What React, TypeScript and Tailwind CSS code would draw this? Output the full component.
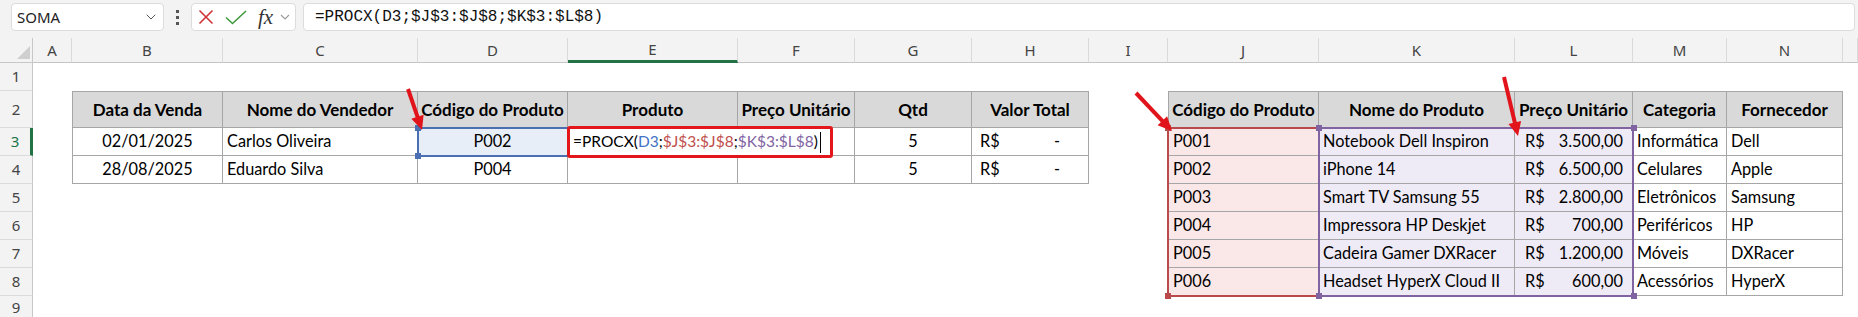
import React from 'react';
import { ChevronDown } from 'lucide-react';

type Align = 'l' | 'c';
type Cell = { t?: string; a?: Align; b?: boolean; bg?: string; acct?: [string, string]; pad?: string };

const HEAD = 'bg-[#d9d9d9]';
const PINK = 'bg-[#fae7e7]';
const LAV = 'bg-[#efebf6]';
const SEL = 'bg-[#e8eef8]';

const letters = ['A', 'B', 'C', 'D', 'E', 'F', 'G', 'H', 'I', 'J', 'K', 'L', 'M', 'N', ''];

const head = (t: string): Cell => ({ t, a: 'c', b: true, bg: HEAD });

const vendas: Cell[][] = [
  ['Data da Venda', 'Nome do Vendedor', 'Código do Produto', 'Produto', 'Preço Unitário', 'Qtd', 'Valor Total'].map(head),
  [
    { t: '02/01/2025', a: 'c' },
    { t: 'Carlos Oliveira', a: 'l' },
    { t: 'P002', a: 'c', bg: SEL },
    {},
    {},
    { t: '5', a: 'c' },
    { acct: ['R$', '-'], pad: 'pl-[8px] pr-[28px]' },
  ],
  [
    { t: '28/08/2025', a: 'c' },
    { t: 'Eduardo Silva', a: 'l' },
    { t: 'P004', a: 'c' },
    {},
    {},
    { t: '5', a: 'c' },
    { acct: ['R$', '-'], pad: 'pl-[8px] pr-[28px]' },
  ],
];

const produtos = [
  ['P001', 'Notebook Dell Inspiron', '3.500,00', 'Informática', 'Dell'],
  ['P002', 'iPhone 14', '6.500,00', 'Celulares', 'Apple'],
  ['P003', 'Smart TV Samsung 55', '2.800,00', 'Eletrônicos', 'Samsung'],
  ['P004', 'Impressora HP Deskjet', '700,00', 'Periféricos', 'HP'],
  ['P005', 'Cadeira Gamer DXRacer', '1.200,00', 'Móveis', 'DXRacer'],
  ['P006', 'Headset HyperX Cloud II', '600,00', 'Acessórios', 'HyperX'],
];

const catalogo: Cell[][] = [
  ['Código do Produto', 'Nome do Produto', 'Preço Unitário', 'Categoria', 'Fornecedor'].map(head),
  ...produtos.map((p): Cell[] => [
    { t: p[0], a: 'l', bg: PINK },
    { t: p[1], a: 'l', bg: LAV },
    { acct: ['R$', p[2]], bg: LAV, pad: 'pl-[10px] pr-[9px]' },
    { t: p[3], a: 'l' },
    { t: p[4], a: 'l' },
  ]),
];

function tableCell(r: number, c: number) {
  if (r >= 2 && r <= 4 && c >= 2 && c <= 8) return { cell: vendas[r - 2][c - 2], top: r === 2, left: c === 2 };
  if (r >= 2 && r <= 8 && c >= 10 && c <= 14) return { cell: catalogo[r - 2][c - 10], top: r === 2, left: c === 10 };
  return null;
}

function CellView({ cell, top, left }: { cell: Cell; top: boolean; left: boolean }) {
  const cls = [
    'h-full flex items-center whitespace-nowrap overflow-hidden border-[#a6a6a6] border-r border-b',
    top ? 'border-t' : '',
    left ? 'border-l' : '',
    cell.bg ?? '',
    cell.b ? 'font-bold text-[17px]' : '',
  ].join(' ');
  if (cell.acct) {
    return (
      <div className={`${cls} justify-between ${cell.pad}`}>
        <span>{cell.acct[0]}</span>
        <span>{cell.acct[1]}</span>
      </div>
    );
  }
  return <div className={`${cls} ${cell.a === 'l' ? 'justify-start pl-[4px]' : 'justify-center'}`}>{cell.t}</div>;
}

function Arrow({ x1, y1, x2, y2 }: { x1: number; y1: number; x2: number; y2: number }) {
  const dx = x2 - x1;
  const dy = y2 - y1;
  const len = Math.hypot(dx, dy);
  const ux = dx / len;
  const uy = dy / len;
  const bx = x2 - ux * 14;
  const by = y2 - uy * 14;
  const nx = -uy * 6.5;
  const ny = ux * 6.5;
  return (
    <g>
      <line x1={x1} y1={y1} x2={bx + ux * 2} y2={by + uy * 2} stroke="#e2141b" strokeWidth={4} />
      <polygon points={`${x2},${y2} ${bx + nx},${by + ny} ${bx - nx},${by - ny}`} fill="#e2141b" />
    </g>
  );
}

function Toolbar() {
  return (
    <div className="h-[38px] bg-[#f3f3f3] flex items-start pt-[3px] pl-[11px] pr-[3px]">
      <div className="w-[153px] h-[28px] bg-white border border-[#dcdcdc] rounded-[4px] flex items-center justify-between pl-[5px] pr-[4px] font-['Noto_Sans',sans-serif] text-[15px] text-[#222]">
        <span>SOMA</span>
        <ChevronDown size={16} strokeWidth={1.5} color="#555" />
      </div>
      <div className="w-[27px] h-[28px] flex flex-col items-center justify-center gap-[3px]">
        <span className="w-[3px] h-[3px] bg-[#555]" />
        <span className="w-[3px] h-[3px] bg-[#555]" />
        <span className="w-[3px] h-[3px] bg-[#555]" />
      </div>
      <div className="w-[105px] h-[28px] bg-white border border-[#dcdcdc] rounded-[4px] flex items-center pl-[6px]">
        <svg width="16" height="16" viewBox="0 0 16 16">
          <path d="M1.5 1.5L14.5 14.5M14.5 1.5L1.5 14.5" stroke="#d13438" strokeWidth="1.6" fill="none" />
        </svg>
        <svg width="22" height="15" viewBox="0 0 22 15" className="ml-[11px]">
          <path d="M1 7.5L7.5 13.5L21 1" stroke="#3e9a3e" strokeWidth="1.6" fill="none" />
        </svg>
        <span className="ml-[11px] font-['Liberation_Serif',serif] italic text-[21px] leading-none text-[#333]">fx</span>
        <svg width="10" height="6" viewBox="0 0 10 6" className="ml-[7px]">
          <path d="M1 1L5 5L9 1" stroke="#9a9a9a" strokeWidth="1.1" fill="none" />
        </svg>
      </div>
      <div className="ml-[7px] flex-1 h-[28px] bg-white border border-[#dcdcdc] rounded-[4px] flex items-center pl-[11px] font-['Liberation_Mono',monospace] text-[16px] text-[#111]">
        =PROCX(D3;$J$3:$J$8;$K$3:$L$8)
      </div>
    </div>
  );
}

function Sheet() {
  const rows = Array.from({ length: 10 }, (_, r) => r);
  const cols = Array.from({ length: 16 }, (_, c) => c);
  return (
    <div className="relative">
      <div className="grid grid-cols-[33px_39px_151px_195px_150px_170px_117px_117px_117px_79px_151px_196px_118px_94px_116px_1fr] grid-rows-[25px_28px_37px_28px_28px_28px_28px_28px_28px_1fr] h-[279px]">
        {rows.map((r) =>
          cols.map((c) => {
            const key = `${r}-${c}`;
            if (r === 0 && c === 0) {
              return (
                <div key={key} className="bg-[#f3f3f3] border-r border-b border-[#c8c8c8] flex items-end justify-end pr-[2px] pb-[3px]">
                  <svg width="13" height="13" viewBox="0 0 13 13">
                    <polygon points="13,0 13,13 0,13" fill="#cfcfcf" />
                  </svg>
                </div>
              );
            }
            if (r === 0) {
              return (
                <div
                  key={key}
                  className={`bg-[#f3f3f3] border-r border-[#dadada] flex items-center justify-center font-['Noto_Sans',sans-serif] text-[15px] text-[#444] ${
                    c === 5 ? 'border-b-[3px] border-b-[#217346]' : 'border-b border-b-[#c4c4c4]'
                  }`}
                >
                  {letters[c - 1]}
                </div>
              );
            }
            if (c === 0) {
              return (
                <div
                  key={key}
                  className={`bg-[#f3f3f3] border-b border-[#dcdcdc] flex items-center justify-center font-['Noto_Sans',sans-serif] text-[15px] ${
                    r === 3 ? 'border-r-[3px] border-r-[#217346] text-[#217346]' : 'border-r border-r-[#c8c8c8] text-[#444]'
                  }`}
                >
                  {r}
                </div>
              );
            }
            const tc = tableCell(r, c);
            if (tc) return <CellView key={key} cell={tc.cell} top={tc.top} left={tc.left} />;
            return <div key={key} className="bg-white" />;
          })
        )}
      </div>

      {/* D3 reference highlight */}
      <div className="absolute left-[417px] top-[89px] w-[152px] h-[30px] border-2 border-[#4a70b3]" />
      <div className="absolute left-[415px] top-[87px] w-[6px] h-[6px] bg-[#4a70b3]" />
      <div className="absolute left-[415px] top-[115px] w-[6px] h-[6px] bg-[#4a70b3]" />

      {/* ranges J3:J8 and K3:L8 */}
      <div className="absolute left-[1167px] top-[89px] w-[153px] h-[170px] border-2 border-[#b84a4c]" />
      <div className="absolute left-[1318px] top-[89px] w-[316px] h-[170px] border-2 border-[#8064a2]" />
      <div className="absolute left-[1165px] top-[87px] w-[6px] h-[6px] bg-[#b84a4c]" />
      <div className="absolute left-[1165px] top-[255px] w-[6px] h-[6px] bg-[#b84a4c]" />
      <div className="absolute left-[1316px] top-[87px] w-[6px] h-[6px] bg-[#8064a2]" />
      <div className="absolute left-[1631px] top-[87px] w-[6px] h-[6px] bg-[#8064a2]" />
      <div className="absolute left-[1316px] top-[255px] w-[6px] h-[6px] bg-[#8064a2]" />
      <div className="absolute left-[1631px] top-[255px] w-[6px] h-[6px] bg-[#8064a2]" />

      {/* cell being edited, E3 */}
      <div className="absolute left-[567px] top-[88px] w-[266px] h-[32px] border-[3px] border-[#e3161b] rounded-[3px] bg-white flex items-center pl-[3px] whitespace-nowrap text-[15.5px]">
        <span>=PROCX(</span>
        <span className="text-[#4472c4]">D3</span>
        <span>;</span>
        <span className="text-[#c0504d]">$J$3:$J$8</span>
        <span>;</span>
        <span className="text-[#8064a2]">$K$3:$L$8</span>
        <span>)</span>
        <span className="ml-[2px] w-px h-[21px] bg-black" />
      </div>

      <svg className="absolute inset-0 w-full h-full pointer-events-none" width="1858" height="279">
        <Arrow x1={408} y1={51} x2={422} y2={92} />
        <Arrow x1={1136} y1={55} x2={1172} y2={93} />
        <Arrow x1={1504} y1={39} x2={1518} y2={98} />
      </svg>
    </div>
  );
}

export default function App() {
  return (
    <div className="w-[1858px] h-[317px] overflow-hidden bg-white font-['Lato',sans-serif] text-[16.3px] text-black">
      <Toolbar />
      <Sheet />
    </div>
  );
}
